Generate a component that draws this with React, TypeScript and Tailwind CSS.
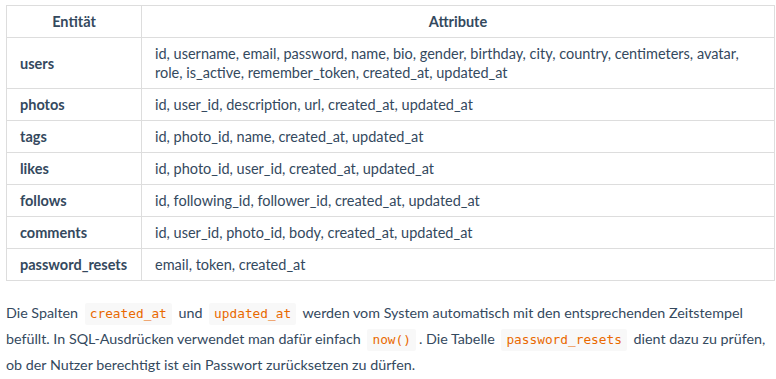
const rows: [string, string][] = [
  [
    "users",
    "id, username, email, password, name, bio, gender, birthday, city, country, centimeters, avatar, role, is_active, remember_token, created_at, updated_at",
  ],
  ["photos", "id, user_id, description, url, created_at, updated_at"],
  ["tags", "id, photo_id, name, created_at, updated_at"],
  ["likes", "id, photo_id, user_id, created_at, updated_at"],
  ["follows", "id, following_id, follower_id, created_at, updated_at"],
  ["comments", "id, user_id, photo_id, body, created_at, updated_at"],
  ["password_resets", "email, token, created_at"],
];

function Code({ children }: { children: string }) {
  return (
    <code className="mx-[3px] inline-block rounded-[2px] bg-[#f8f8f8] px-[5px] py-[3px] font-['DejaVu_Sans_Mono',monospace] text-[12.8px] leading-[16px] text-[#e96900]">
      {children}
    </code>
  );
}

export default function App() {
  return (
    <div className="bg-white pl-[6px] pr-[1px] pt-[5px] font-['Lato',sans-serif] text-[#34495e]">
      <table className="w-full border-collapse text-[14.5px] leading-[19px]">
        <thead>
          <tr>
            <th className="w-[135px] border border-[#dddddd] px-[13px] py-[6px] text-center font-bold">
              Entität
            </th>
            <th className="border border-[#dddddd] px-[13px] py-[6px] text-center font-bold">
              Attribute
            </th>
          </tr>
        </thead>
        <tbody>
          {rows.map(([name, attrs]) => (
            <tr key={name}>
              <td className="border border-[#dddddd] px-[13px] py-[6px] font-bold">{name}</td>
              <td className="border border-[#dddddd] px-[13px] py-[6px]">{attrs}</td>
            </tr>
          ))}
        </tbody>
      </table>

      <p className="mr-[-1px] mt-[19px] text-[14.3px] leading-[26px]">
        Die Spalten <Code>created_at</Code> und <Code>updated_at</Code> werden vom System
        automatisch mit den entsprechenden Zeitstempel befüllt. In SQL-Ausdrücken verwendet man
        dafür einfach <Code>now()</Code>. Die Tabelle <Code>password_resets</Code> dient dazu zu
        prüfen, ob der Nutzer berechtigt ist ein Passwort zurücksetzen zu dürfen.
      </p>
    </div>
  );
}
